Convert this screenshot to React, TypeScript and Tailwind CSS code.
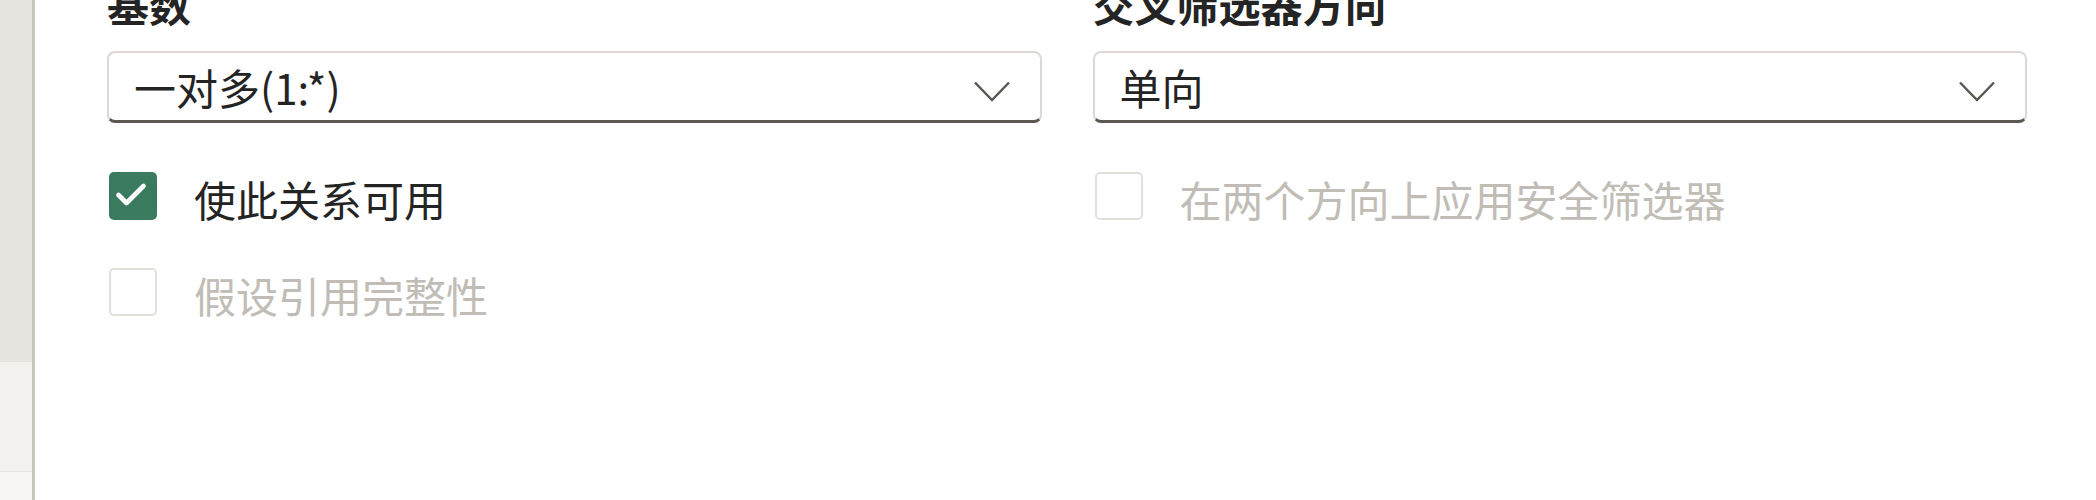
import React from 'react';

const FONT = { fontFamily: '"Microsoft YaHei", "Noto Sans CJK SC", "Noto Sans", sans-serif' };

/**
 * Dropdown field with a dark underline, like the Fluent combo box
 */
const Dropdown: React.FC<{ value: string }> = ({ value }) => {
  return (
    <div className="flex h-[72px] items-center justify-between rounded-[8px] border-2 border-b-[3px] border-[#dcd9d3] border-b-[#5b5852] bg-white pl-[25px] pr-[30px]">
      <span className="text-[42px] leading-none text-[#242424]">{value}</span>
      <svg width="36" height="21" viewBox="0 0 36 21" className="mt-[10px]" fill="none">
        <path d="M1 1.5 L18 19 L35 1.5" stroke="#5b5852" strokeWidth="2.5" />
      </svg>
    </div>
  );
};

/**
 * Checkbox row; disabled rows are greyed out
 */
const CheckRow: React.FC<{ label: string; checked?: boolean; disabled?: boolean }> = ({
  label,
  checked = false,
  disabled = false
}) => {
  return (
    <div className="flex h-[48px] items-center gap-[37px]">
      {checked ? (
        <div className="flex h-[48px] w-[48px] items-center justify-center rounded-[5px] bg-[#3a7a5e]">
          <svg width="48" height="48" viewBox="0 0 48 48" fill="none">
            <path d="M9.5 23 L17.5 31 L34.5 14" stroke="white" strokeWidth="4.6" strokeLinecap="round" strokeLinejoin="round" />
          </svg>
        </div>
      ) : (
        <div className="h-[48px] w-[48px] rounded-[5px] border-2 border-[#e3e0db] bg-white" />
      )}
      <span
        className={`mt-[6px] text-[42px] leading-none ${disabled ? 'text-[#c1bdb6]' : 'text-[#242424]'}`}
      >
        {label}
      </span>
    </div>
  );
};

export default function App() {
  return (
    <div className="flex h-[500px] w-[2096px] overflow-hidden bg-white" style={FONT}>
      {/* left rail */}
      <div className="flex w-[35px] flex-col border-r-[3px] border-[#c9c6c0]">
        <div className="h-[362px] bg-[#e7e4df]" />
        <div className="h-[110px] border-b border-[#e4e2dd] bg-[#f3f2ee]" />
        <div className="flex-1 bg-[#f7f6f3]" />
      </div>

      {/* relationship options */}
      <div className="grid flex-1 grid-cols-2 gap-x-[51px] pl-[72px] pr-[69px]">
        <div className="flex flex-col">
          <h3 className="mt-[-17px] mb-[26px] h-[42px] text-[42px] font-bold leading-none text-[#242424]">基数</h3>
          <Dropdown value="一对多(1:*)" />
          <div className="mt-[49px] flex flex-col gap-[48px] pl-[2px]">
            <CheckRow label="使此关系可用" checked />
            <CheckRow label="假设引用完整性" disabled />
          </div>
        </div>
        <div className="flex flex-col">
          <h3 className="mt-[-17px] mb-[26px] h-[42px] text-[42px] font-bold leading-none text-[#242424]">交叉筛选器方向</h3>
          <Dropdown value="单向" />
          <div className="mt-[49px] flex flex-col pl-[2px]">
            <CheckRow label="在两个方向上应用安全筛选器" disabled />
          </div>
        </div>
      </div>
    </div>
  );
}
